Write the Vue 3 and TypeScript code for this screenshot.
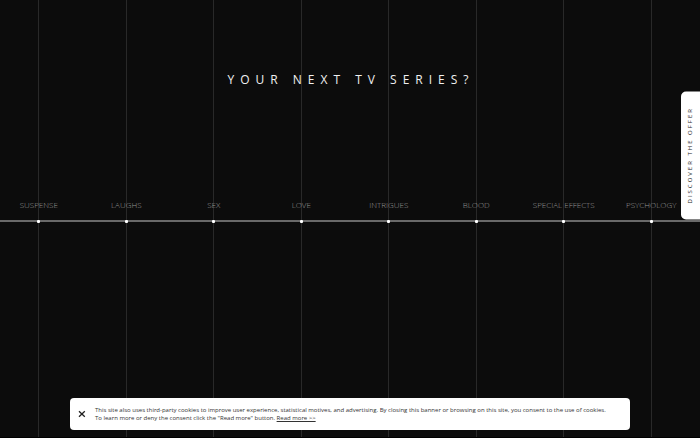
<script setup lang="ts">
import { ref } from 'vue'

const genres: string[] = [
  'Suspense',
  'Laughs',
  'Sex',
  'Love',
  'Intrigues',
  'Blood',
  'Special effects',
  'Psychology',
]
const bannerOpen = ref(true)
</script>

<template>
  <main class="page">
    <ul class="timeline">
      <li v-for="genre in genres" :key="genre" class="column">
        <a href="#" class="label">{{ genre }}</a>
        <span class="dot"></span>
      </li>
    </ul>
    <h1 class="title">Your next TV series?</h1>

    <a href="#" class="offer">Discover the offer</a>

    <aside v-if="bannerOpen" class="cookies">
      <button type="button" class="close" aria-label="Close" @click="bannerOpen = false">
        <svg viewBox="0 0 8 8" width="8" height="8">
          <path d="M1 1.2L6.8 6.8M6.8 1.2L1 6.8" stroke="#222" stroke-width="1.3" fill="none" />
        </svg>
      </button>
      <p class="notice">
        This site also uses third-party cookies to improve user experience, statistical motives, and
        advertising. By closing this banner or browsing on this site, you consent to the use of cookies.<br />
        To learn more or deny the consent click the "Read more" button.
        <a href="#">Read more &gt;&gt;</a>
      </p>
    </aside>
  </main>
</template>

<style>
body {
  background: #0c0c0c;
}
</style>

<style scoped>
.page {
  display: grid;
  min-height: 100vh;
  box-sizing: border-box;
  overflow: hidden;
  border-bottom: 1px solid #000;
  background: #0c0c0c;
  color: #f0f0f0;
  font-family: "Open Sans", "Noto Sans", sans-serif;
}

.title {
  grid-area: 1 / 1;
  align-self: start;
  margin: 71px 0 0;
  padding-left: 2px;
  font-size: 12px;
  line-height: 18px;
  font-weight: 400;
  letter-spacing: 6px;
  text-align: center;
  text-transform: uppercase;
}

.timeline {
  grid-area: 1 / 1;
  display: grid;
  grid-template-columns: repeat(8, 12.5vw);
  margin: 0 0 0 -5px;
  padding: 0;
  list-style: none;
  background: linear-gradient(#6a6a6a, #6a6a6a) 0 220px / 200vw 2px no-repeat;
}

.column {
  display: flex;
  flex-direction: column;
  align-items: center;
  padding-top: 199px;
  background: linear-gradient(#292929, #292929) center / 1px 100% no-repeat;
}

.label {
  color: #989898;
  font-size: 8px;
  line-height: 12px;
  font-weight: 300;
  text-decoration: none;
  text-transform: uppercase;
  white-space: nowrap;
}

.dot {
  width: 3px;
  height: 3px;
  margin-top: 9px;
  border-radius: 1px;
  background: #fff;
}

.offer {
  position: absolute;
  top: 91px;
  right: 0;
  box-sizing: border-box;
  width: 19px;
  padding: 16px 0;
  border-radius: 0 5px 5px 0;
  background: #fff;
  color: #222;
  font-size: 6px;
  line-height: 19px;
  letter-spacing: 2px;
  text-decoration: none;
  text-transform: uppercase;
  white-space: nowrap;
  writing-mode: vertical-rl;
  transform: rotate(180deg);
}

.cookies {
  position: fixed;
  bottom: 8px;
  left: 10%;
  right: 10%;
  display: flex;
  align-items: center;
  gap: 9px;
  padding: 8px;
  border-radius: 4px;
  background: #fff;
  color: #333;
}

.close {
  display: flex;
  padding: 0;
  border: 0;
  background: none;
  cursor: pointer;
}

.notice {
  margin: 0;
  font-size: 6px;
  line-height: 8px;
  white-space: nowrap;
}

.notice a {
  color: inherit;
}
</style>
